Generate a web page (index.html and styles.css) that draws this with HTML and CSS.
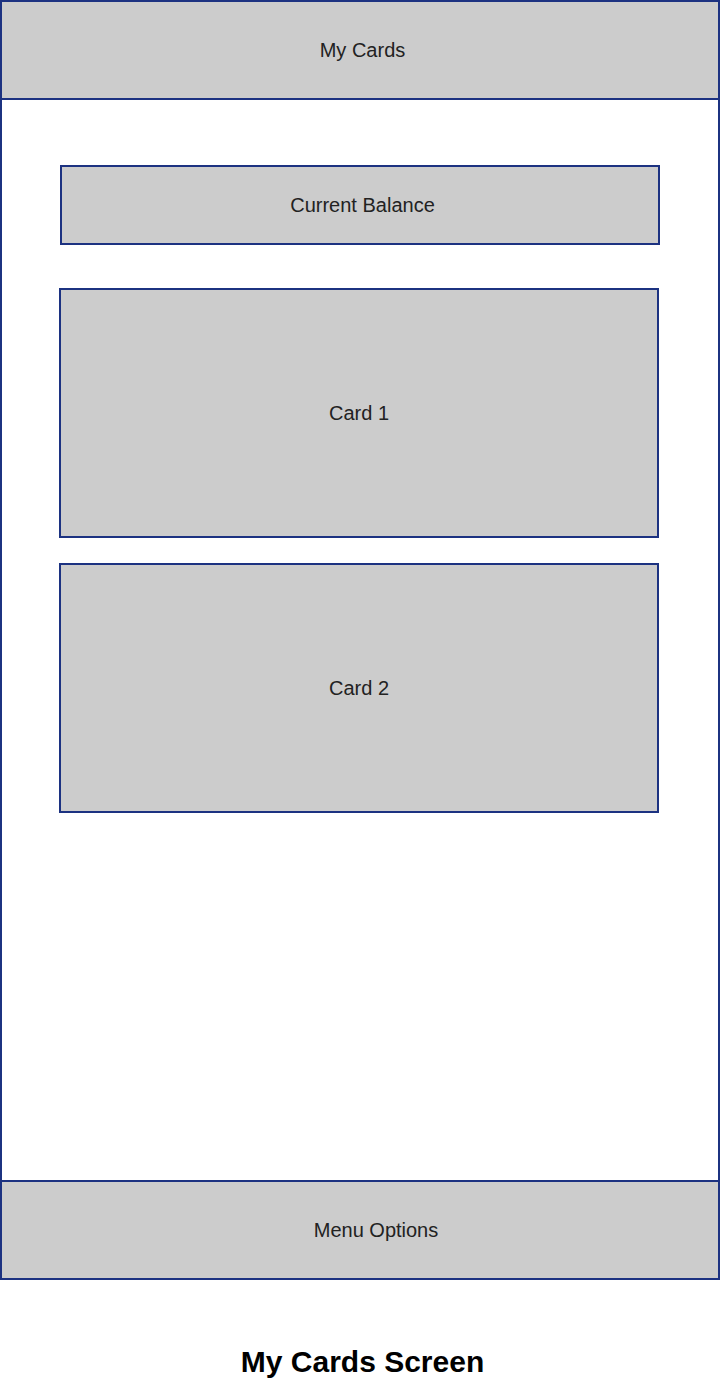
FILE: index.html
```html
<!DOCTYPE html>
<html lang="en">
<head>
    <meta charset="UTF-8">
    <meta name="viewport" content="width=device-width, initial-scale=1.0">
    <title>My Cards Screen</title>
    <link rel="stylesheet" href="styles.css">
</head>
<body>
    <div class="phone">
        <header class="top-bar">My Cards</header>

        <main class="content">
            <div class="balance">Current Balance</div>
            <div class="card card-first">Card 1</div>
            <div class="card">Card 2</div>
        </main>

        <footer class="menu">Menu Options</footer>
    </div>

    <h1 class="caption">My Cards Screen</h1>
</body>
</html>
```

FILE: styles.css
```css
body {
    margin: 0;
    font-family: 'Liberation Sans', Arial, sans-serif;
    background-color: #ffffff;
    color: #222222;
}

.phone {
    width: 720px;
    height: 1280px;
    box-sizing: border-box;
    border: 2px solid #1c3281;
    display: flex;
    flex-direction: column;
}

.top-bar {
    height: 98px;
    box-sizing: border-box;
    border-bottom: 2px solid #1c3281;
    background-color: #cccccc;
    display: flex;
    align-items: center;
    justify-content: center;
    padding-left: 5px;
    font-size: 20px;
}

.content {
    flex: 1;
    display: flex;
    flex-direction: column;
    padding-top: 65px;
}

.balance {
    width: 600px;
    height: 80px;
    box-sizing: border-box;
    margin-left: 58px;
    border: 2px solid #1c3281;
    background-color: #cccccc;
    display: flex;
    align-items: center;
    justify-content: center;
    padding-left: 5px;
    font-size: 20px;
}

.card {
    width: 600px;
    height: 250px;
    box-sizing: border-box;
    margin-left: 57px;
    margin-top: 25px;
    border: 2px solid #1c3281;
    background-color: #cccccc;
    display: flex;
    align-items: center;
    justify-content: center;
    font-size: 20px;
}

.card-first {
    margin-top: 43px;
}

.menu {
    height: 98px;
    box-sizing: border-box;
    border-top: 2px solid #1c3281;
    background-color: #cccccc;
    display: flex;
    align-items: center;
    justify-content: center;
    padding-left: 32px;
    font-size: 20px;
}

.caption {
    margin: 65px 0 0;
    padding-left: 5px;
    text-align: center;
    font-size: 30px;
    line-height: 34px;
    font-weight: bold;
    color: #000000;
}
```
